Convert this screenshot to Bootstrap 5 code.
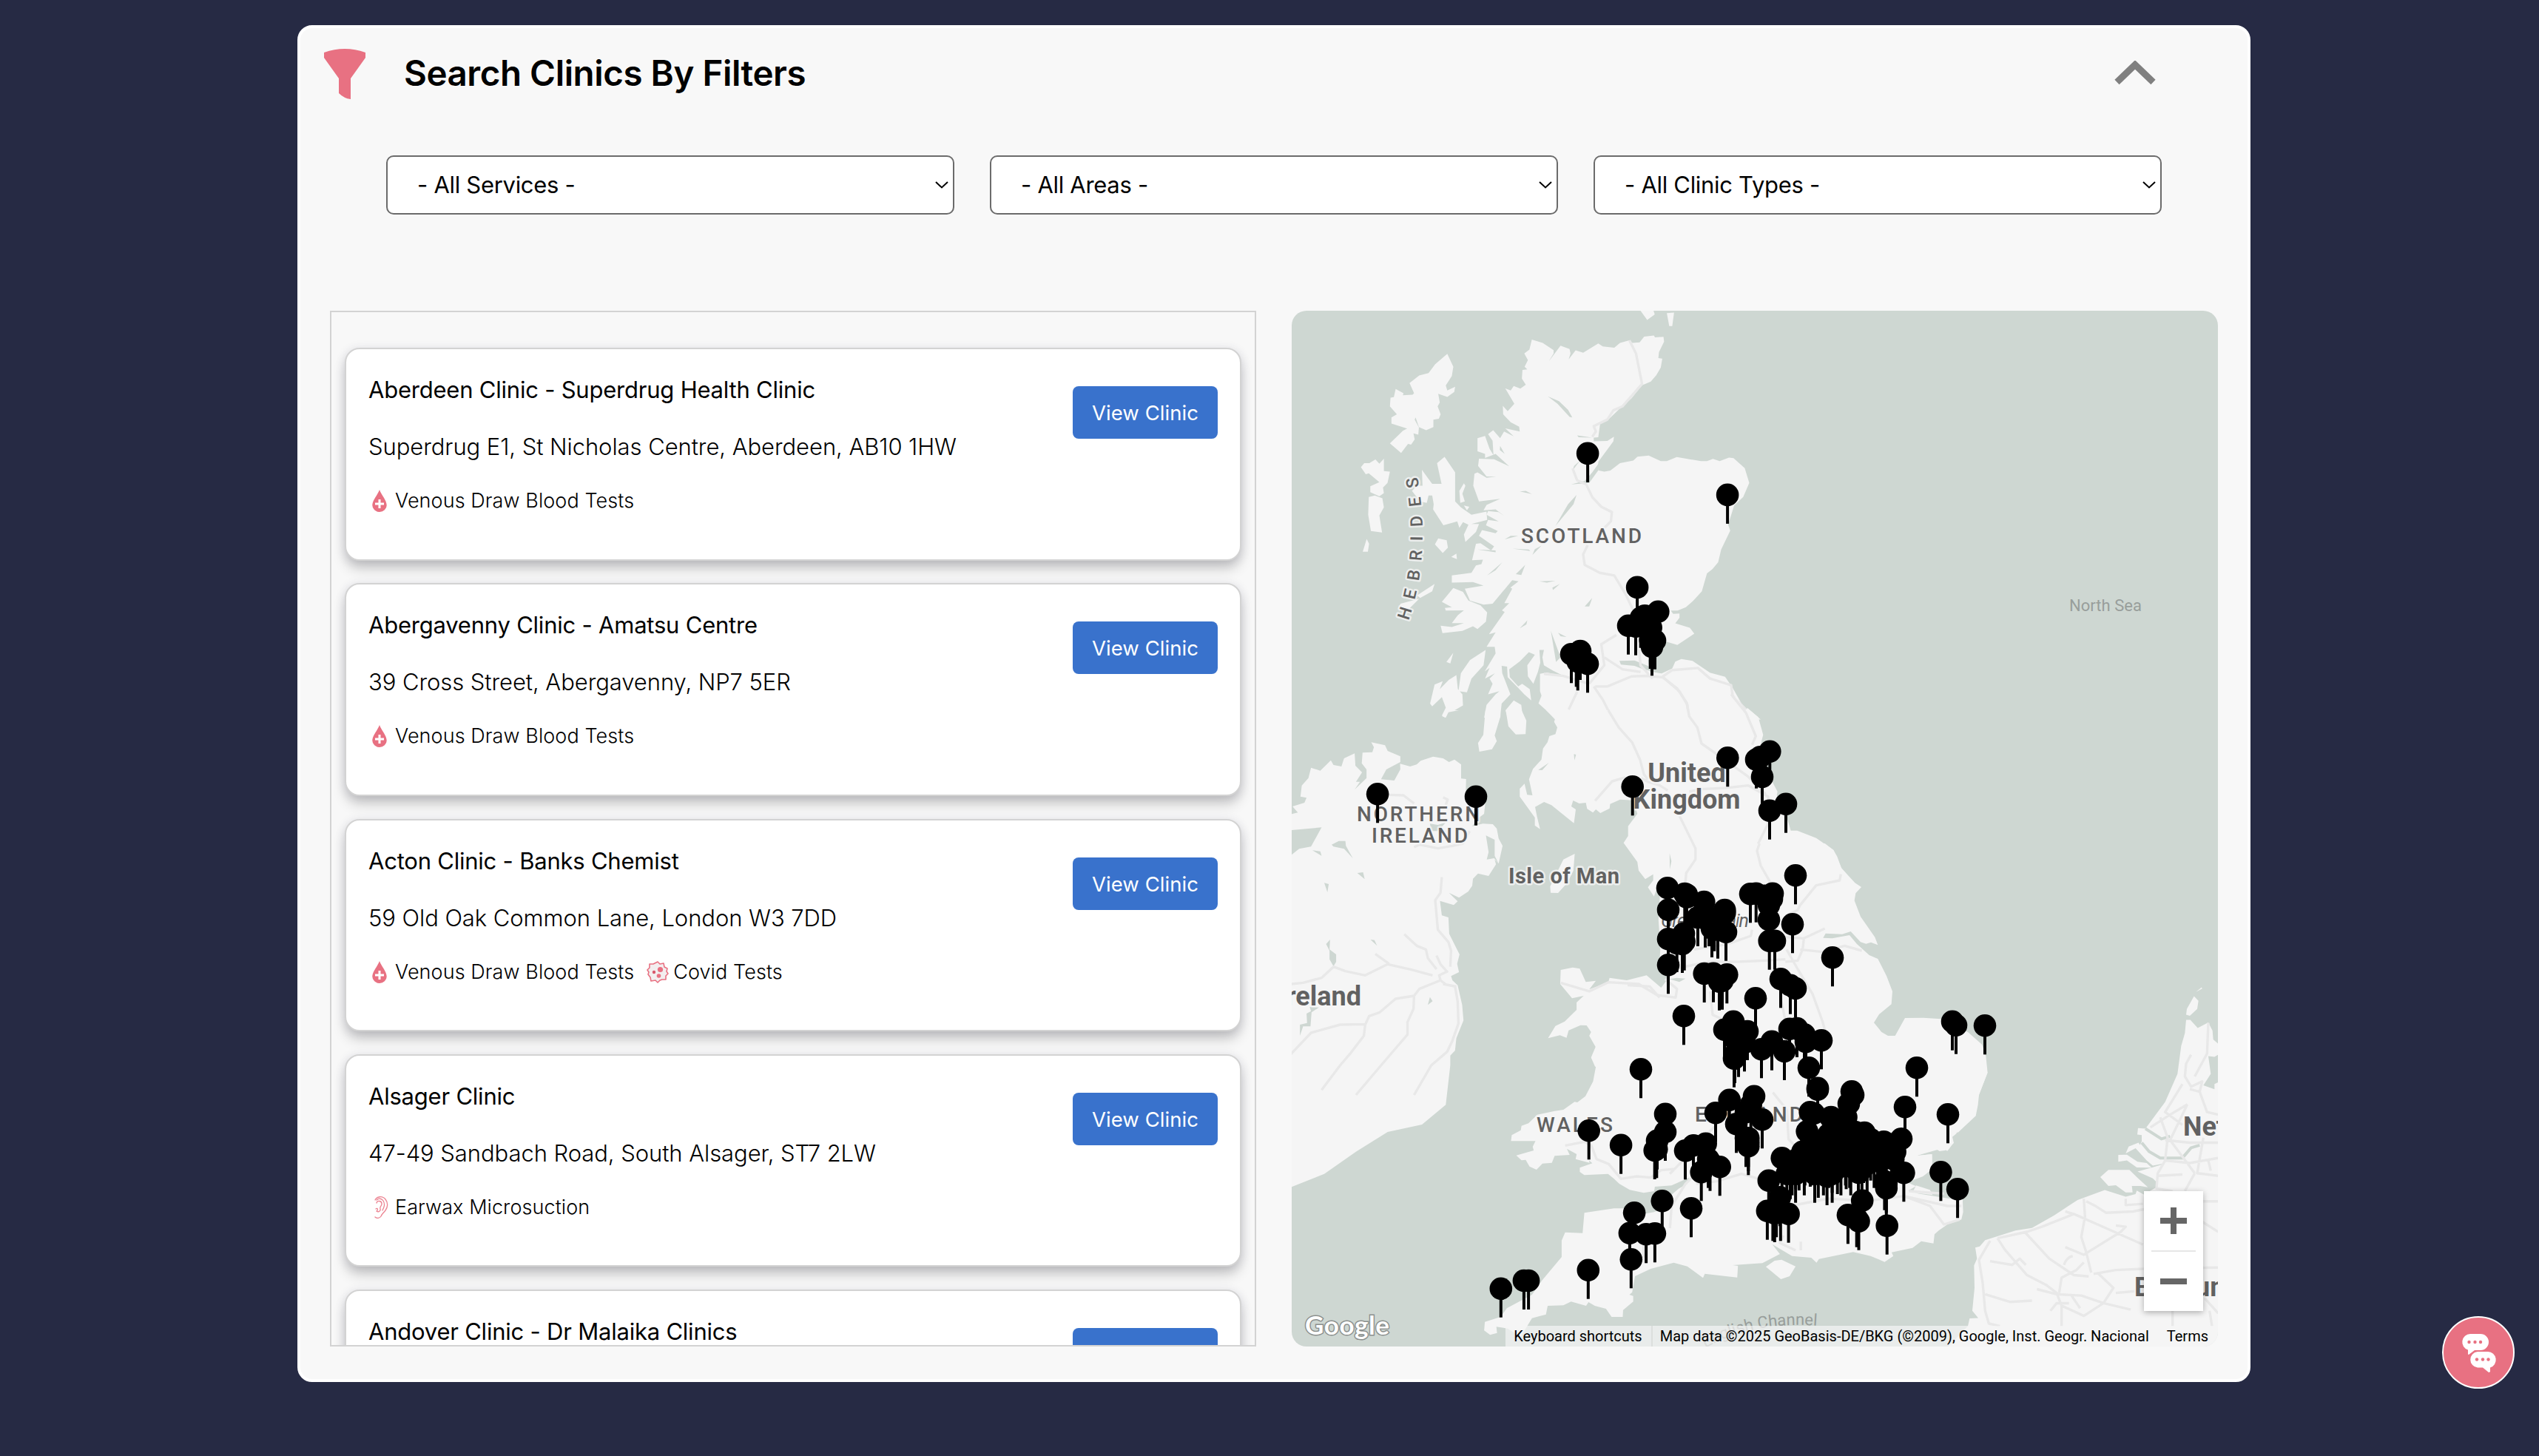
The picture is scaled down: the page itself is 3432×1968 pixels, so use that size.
<!DOCTYPE html>
<html lang="en">
<head>
<meta charset="utf-8">
<meta name="viewport" content="width=device-width, initial-scale=1">
<title>Search Clinics</title>
<link rel="stylesheet" href="https://cdn.jsdelivr.net/npm/bootstrap@5.3.0/dist/css/bootstrap.min.css">
<script src="https://cdn.jsdelivr.net/npm/bootstrap@5.3.0/dist/js/bootstrap.bundle.min.js"></script>
<style>
html, body { height: 1968px; overflow: hidden; }
body { background: #262a44; font-family: Inter, "Liberation Sans", sans-serif; color: #000; }
.finder { width: 2640px; height: 1834px; margin: 34px 0 0 402px; border: 4px solid #fff; border-radius: 20px; background: #f8f8f8; }
.finder-head { height: 172px; padding: 28px 124px 0 32px; }
.finder-head h1 { font-size: 47.5px; font-weight: 600; line-height: 66px; margin: 0 0 0 52px; letter-spacing: -.45px; }
.filters { padding: 0 116px; gap: 48px; height: 80px; }
.filters .form-select { height: 80px; flex: 1 1 0; border: 2px solid #6b6b6b; border-radius: 10px; font-size: 31px; letter-spacing: -.3px; color: #000; padding: 1px 40px 0; background: #fff url("data:image/svg+xml,%3Csvg xmlns='http://www.w3.org/2000/svg' width='18' height='10'%3E%3Cpath d='M1 1l8 7.5L17 1' fill='none' stroke='%23000' stroke-width='2'/%3E%3C/svg%3E") no-repeat right 6px center / 18px 10px; }
.panes { padding: 130px 40px 0; gap: 48px; }
.results { width: 1252px; height: 1400px; border: 2px solid #d3d3d3; padding: 48px 18px 0; overflow: hidden; }
.clinic { height: 287.5px; margin-bottom: 30.8px; background: #fff; border: 2px solid #d3d3d3; border-radius: 20px; padding: 31px 30px 0; box-shadow: 0 12px 18px -2px rgba(0,0,0,.2), 0 2px 14px rgba(50,50,93,.14); }
.clinic h2 { font-size: 31px; font-weight: 400; line-height: 48px; margin: 0 0 29px; letter-spacing: -.22px; }
.clinic .addr { font-size: 31px; font-weight: 300; line-height: 48px; margin: 0 0 25px; letter-spacing: -.07px; }
.svc { font-size: 27px; font-weight: 300; line-height: 48px; margin-right: 17px; letter-spacing: .08px; }
.svc svg { width: 30px; height: 30px; margin-right: 6px; }
.btn-view { width: 196px; height: 71px; margin-top: 19px; background: #3972cc; color: #fff; border-radius: 8px; font-size: 27.5px; line-height: 72px; padding: 0; border: 0; letter-spacing: .05px; }
.map { width: 1252px; height: 1400px; border-radius: 20px; overflow: hidden; background: #ced7d2; }
.map > svg { display: block; }
.land { fill: #f5f5f5; }
.sea { fill: #ced7d2; }
.inlet { fill: none; stroke: #ced7d2; stroke-width: 4; vector-effect: non-scaling-stroke; }
.road { fill: none; stroke: #e8e8e8; stroke-width: 3.4; stroke-linejoin: round; vector-effect: non-scaling-stroke; }
.lbl { font-family: Roboto, sans-serif; fill: #616161; paint-order: stroke; stroke: #f5f5f5; stroke-width: 5px; stroke-linejoin: round; stroke-opacity: .8; }
.region { font-size: 28px; font-weight: 500; }
.country { font-size: 36px; font-weight: 700; }
.water { font-family: Roboto, sans-serif; fill: #989e9b; font-size: 22px; }
.zoomer { right: 20px; bottom: 48px; width: 80px; height: 162px; background: #fff; box-shadow: 0 2px 8px rgba(0,0,0,.3); }
.legal { right: 0; bottom: 0; height: 28px; background: rgba(245,245,245,.7); font: 20px/28px Roboto, sans-serif; white-space: nowrap; }
.legal span { padding: 0 12px 0 11px; }
.legal .credits { padding: 0 24px 0 10px; border-left: 2px solid #dcdfdd; }
.legal .terms { padding: 0 13px 0 0; }
.chat { right: 33px; top: 1779px; width: 98px; height: 98px; border: 2px solid #fff; background: #e87182; }
</style>
</head>
<body>
<svg width="0" height="0" class="position-absolute">
  <symbol id="drop" viewBox="0 0 30 30"><path d="M15 0C17.500 7 24.700 14 24.700 21a9.700 9 0 0 1-19.400 0C5.300 14 12.500 7 15 0z" fill="#e87182"/><path d="M15 13v12M9 19h12" stroke="#fff" stroke-width="3"/></symbol>
  <symbol id="covid" viewBox="0 0 30 30"><path d="M15 1l3 3 5-1 1 5 4 2-1 4 2 3-3 3 0 5-5 0-3 1-3 3-3-3-6 1-1-5-3-4 1-3-2-3 3-3 0-5 5 0z" fill="#f3eeef" stroke="#e87182" stroke-width="1.6" stroke-linejoin="round"/><circle cx="18.500" cy="11.500" r="3.600" fill="#e87182"/><circle cx="10" cy="15" r="2.200" fill="#d8576b"/><circle cx="16.500" cy="20" r="2.800" fill="#e87182"/></symbol>
  <symbol id="ear" viewBox="0 0 30 30"><g fill="none" stroke="#ec8492" stroke-width="1.300" stroke-linecap="round"><path d="M9 5C11 0 19-1 23 4c4 5 3 11 0 15-3 4-5 5-6 8-2 3-6 3-8 1"/><path d="M11 5c3-3 7-2 9 1 3 5 1 9-1 13M11 9c1-4 7-3 7 1 0 4-3 3-2 7 1 3-3 5-5 3M10 17c3-2 3 2 1 3"/></g></symbol>
</svg>

<main class="finder">
  <header class="finder-head d-flex align-items-start">
    <svg width="56" height="68" viewBox="0 0 56 68" class="flex-shrink-0"><path d="M0 5Q28-5 56 5v7L36 40v28q-9-1-16-8V40L0 12z" fill="#e87182"/></svg>
    <h1>Search Clinics By Filters</h1>
    <svg class="ms-auto mt-3" width="56" height="34" viewBox="0 0 56 34"><path d="M3.500 29L28 5.500 52.500 29" fill="none" stroke="#808080" stroke-width="9"/></svg>
  </header>
  <div class="filters d-flex">
    <select class="form-select"><option>- All Services -</option></select>
    <select class="form-select"><option>- All Areas -</option></select>
    <select class="form-select"><option>- All Clinic Types -</option></select>
  </div>
  <div class="panes d-flex">
    <section class="results">
      <article class="clinic d-flex justify-content-between align-items-start"><div><h2>Aberdeen Clinic - Superdrug Health Clinic</h2><p class="addr">Superdrug E1, St Nicholas Centre, Aberdeen, AB10 1HW</p><div class="d-flex"><span class="svc d-flex align-items-center"><svg><use href="#drop"/></svg>Venous Draw Blood Tests</span></div></div><a class="btn btn-view">View Clinic</a></article>
      <article class="clinic d-flex justify-content-between align-items-start"><div><h2>Abergavenny Clinic - Amatsu Centre</h2><p class="addr">39 Cross Street, Abergavenny, NP7 5ER</p><div class="d-flex"><span class="svc d-flex align-items-center"><svg><use href="#drop"/></svg>Venous Draw Blood Tests</span></div></div><a class="btn btn-view">View Clinic</a></article>
      <article class="clinic d-flex justify-content-between align-items-start"><div><h2>Acton Clinic - Banks Chemist</h2><p class="addr">59 Old Oak Common Lane, London W3 7DD</p><div class="d-flex"><span class="svc d-flex align-items-center"><svg><use href="#drop"/></svg>Venous Draw Blood Tests</span><span class="svc d-flex align-items-center"><svg><use href="#covid"/></svg>Covid Tests</span></div></div><a class="btn btn-view">View Clinic</a></article>
      <article class="clinic d-flex justify-content-between align-items-start"><div><h2>Alsager Clinic</h2><p class="addr">47-49 Sandbach Road, South Alsager, ST7 2LW</p><div class="d-flex"><span class="svc d-flex align-items-center"><svg><use href="#ear"/></svg>Earwax Microsuction</span></div></div><a class="btn btn-view">View Clinic</a></article>
      <article class="clinic d-flex justify-content-between align-items-start"><div><h2>Andover Clinic - Dr Malaika Clinics</h2></div><a class="btn btn-view">View Clinic</a></article>
    </section>

    <section class="map position-relative">
      <svg width="1252" height="1400" viewBox="1746 420 1252 1400">
        <!-- Scotland -->
        <g transform="translate(1740 410) scale(.40816 .35714)">
          <path class="land" d="M810 137L846 150 882 177 882 190 866 220 905 160 935 173 938 190 932 212 955 178 980 187 1030 152 1045 163 1083 168 1102 150 1133 140 1143 150 1167 148 1182 126 1214 122 1218 129 1246 127 1248 145 1231 185 1229 207 1242 209 1237 243 1222 272 1204 296 1175 310 1140 360 1100 400 1065 438 1036 457 1030 507 1015 508 1015 522 1060 521 1082 505 1080 522 1030 600 1030 632 1050 637 1070 633 1102 605 1146 595 1160 580 1197 576 1237 597 1257 597 1290 582 1370 597 1390 597 1410 589 1432 597 1463 584 1478 586 1515 624 1530 680 1510 733 1480 765 1460 838 1467 860 1437 932 1427 980 1408 1006 1390 1022 1373 1090 1345 1125 1320 1150 1293 1163 1270 1163 1278 1175 1299 1174 1299 1190 1285 1211 1333 1228 1348 1250 1292 1293 1255 1280 1230 1330 1195 1350 1200 1393 1240 1401 1275 1382 1285 1356 1305 1346 1342 1353 1400 1398 1450 1413 1475 1455 1517 1540 1524 1532 1568 1575 885 1568 832 1514 842 1485 837 1468 837 1402 860 1397 915 1410 880 1390 850 1370 845 1340 850 1312 835 1312 838 1360 830 1395 815 1440 797 1412 795 1370 820 1330 800 1320 770 1355 735 1385 737 1415 765 1450 778 1440 803 1460 808 1503 785 1480 760 1450 730 1415 728 1375 710 1372 712 1400 739 1480 710 1515 705 1568 652 1568 660 1520 690 1480 703 1468 665 1480 680 1440 670 1420 688 1400 655 1420 670 1380 654 1393 690 1325 687 1300 660 1300 690 1245 668 1252 720 1168 711 1162 735 1135 719 1135 745 1080 739 1076 766 1052 745 1048 680 1137 650 1140 605 1125 588 1080 650 1068 615 1055 545 1057 545 1030 610 1020 625 992 643 987 648 970 612 972 625 910 640 908 675 935 685 920 635 880 645 858 690 870 697 862 658 840 665 820 700 825 660 800 665 786 700 790 719 805 690 780 650 783 660 763 705 740 635 750 616 690 620 645 630 640 660 660 692 656 660 655 632 615 635 588 685 590 735 617 690 570 655 585 655 570 630 560 630 510 655 502 670 550 683 575 680 520 665 495 682 480 705 510 718 485 750 503 722 473 770 485 768 467 740 450 715 420 714 388 730 408 752 380 722 322 740 330 750 313 772 323 790 308 777 285 779 252 795 250 786 240 797 215 785 190 802 175z"/>
          <path class="land" d="M530 191L550 240 545 275 525 311 530 330 556 316 553 335 530 354 500 342 505 375 498 390 508 420 502 437 484 440 484 468 460 480 436 468 425 432 422 440 436 470 434 497 418 492 422 515 410 535 400 532 377 566 340 530 383 482 397 474 345 455 345 432 363 420 340 390 342 357 353 355 359 324 385 340 383 348 415 346 420 340 405 302 437 273 468 264 490 230zM244 620L255 605 272 605 292 591 305 607 320 588 320 635 340 637 332 680 317 697 320 718 305 730 275 715 275 692 305 677 270 643 260 647zM270 733L290 727 315 738 320 772 305 803 314 867 277 862 268 800zM263 892L271 910 267 940 250 940zM521 581L556 640 556 750 575 772 610 800 660 788 662 820 610 835 635 835 625 865 590 903 585 875 600 838 582 828 570 850 563 825 517 840 483 780 485 760 480 727 468 727 462 755 440 750 413 710 430 690 448 690 446 630 465 660 480 683 511 683 496 605zM585 681L590 690 580 720 588 750 573 755 570 710zM585 765L603 770 595 783zM500 890L528 897 532 925 515 945 489 912zM560 947L562 968 543 960zM488 1062L480 1090 440 1115 430 1105zM437 1118L400 1160 370 1150 375 1137zM550 1077L582 1092 600 1125 640 1143 662 1170 658 1205 630 1233 615 1222 580 1240 514 1248 508 1220 545 1225 585 1210 545 1210 565 1180 585 1162 525 1163 522 1153 545 1150 512 1130zM657 1312L650 1370 610 1420 595 1472 567 1468 575 1400 605 1350zM560 1407L565 1460 580 1480 582 1522 550 1543 530 1540 523 1568 512 1560 525 1530 512 1490 480 1525 473 1515 488 1443 515 1430 505 1460 535 1425zM550 1322L540 1363 527 1357zM750 1503L775 1520 780 1568 730 1568 723 1540zM1170 28L1213 28 1217 42 1192 63zM1257 37L1281 35 1275 86 1265 86z"/>
          <path class="sea" d="M863 352L900 370 930 403 944 432 935 430 895 380zM960 500L1010 508 965 507zM958 725L948 760 888 843 930 760zM1035 600L1030 632 1000 680 940 685 985 672 1010 640zM970 595L945 632 950 615zM842 917L812 952 820 930zM745 928L800 932 805 937zM788 990L775 1028 757 1025zM712 980L690 1010 662 1030zM835 1052L888 1050 860 1057zM903 1062L880 1085 878 1076zM1010 1115L1000 1147 985 1147zM873 1240L905 1340 890 1357zM897 1247L925 1263 905 1260zM795 1200L770 1230 792 1215zM770 712L810 722 790 710zM630 932L690 935 690 942zM720 893L765 880 740 880zM705 540L720 570 704 555zM1100 1353L1150 1352 1190 1370 1240 1401 1180 1385 1150 1372 1105 1367z"/>
          <path class="road" d="M1133 140L1155 190 1175 305 1110 390 1080 405 1060 440 1015 465 1022 485 1010 505M945 625L960 670 990 685 1010 733 1040 770 1075 790 1072 825 1050 850M995 915L980 950 985 990 1035 1020 1083 1030 1120 1100 1145 1160M1090 1255L1040 1290 1050 1370 1000 1440M1015 1450L1045 1500 1075 1568M960 1470L932 1537M1020 1450L1060 1450 1140 1412 1190 1410 1240 1415 1275 1388 1360 1380 1400 1420 1470 1445 1475 1485 1530 1550M1245 1415L1300 1470 1325 1520 1330 1568M1165 1310L1170 1370 1210 1420M1050 1340L1110 1385 1170 1395M850 1402L915 1410 1000 1440"/>
        </g>
        <!-- Borders and the north east coast -->
        <g transform="translate(2100 700) scale(.33333)">
          <path class="land" d="M580 700L740 725 777 780 787 772 830 808 850 880 842 910 850 1000 908 1110 905 1125 930 1160 962 1268 988 1268 1065 1298 1135 1347 1150 1373 1167 1420 1200 1460 1200 1500 580 1500z"/>
        </g>
        <!-- Ireland, Man, Cumbria and north Wales -->
        <g transform="translate(1740 960) scale(.35714 .33333)">
          <path class="land" d="M980 0L1013 37 1010 47 1022 70 1015 97 992 105 985 130 968 155 962 200 930 238 915 280 928 345 908 343 898 298 880 318 880 350 937 435 937 467 957 482 945 430 938 392 972 372 1000 385 1085 458 1092 402 1075 390 1082 366 1105 378 1130 375 1135 400 1157 415 1168 402 1185 417 1220 398 1222 380 1260 362 1310 365 1325 420 1290 470 1290 510 1273 538 1325 615 1330 650 1355 685 1385 665 1385 690 1365 718 1388 755 1400 720 1410 760 1405 850 1412 960 1410 1010 1440 1090 1415 1125 1360 1075 1285 1095 1220 1085 1215 1103 1143 1132 1168 1097 1130 1102 1107 1048 1080 1043 1035 1053 1033 1110 1078 1168 1122 1158 1095 1185 1095 1215 1050 1262 1015 1280 987 1330 1032 1318 1057 1328 1065 1298 1110 1277 1133 1278 1150 1305 1143 1320 1167 1365 1150 1408 1165 1445 1568 1445 1568 0zM1088 582L1083 650 1060 700 1025 741 997 740 995 715 1045 605zM750 0L806 0 807 25 785 102 793 125 775 158 727 168 722 133 742 100zM827 0L887 0 905 42 902 97 865 98 837 65zM600 0L650 0 610 8 600 30 587 25z"/>
          <path class="land" d="M0 600L45 562 90 553 130 475 0 488 0 425 40 415 20 390 65 375 73 355 50 350 55 305 80 275 90 233 125 245 165 203 175 222 205 228 215 195 255 175 258 225 283 252 260 290 275 290 255 322 300 275 300 240 282 215 285 172 322 170 328 150 318 130 370 142 380 165 428 187 428 210 375 240 355 280 405 285 428 240 427 217 465 228 490 220 505 205 552 188 590 195 612 210 633 200 658 220 658 277 677 279 675 350 720 340 750 370 745 420 720 440 700 470 740 460 778 462 793 480 800 520 815 550 800 622 785 605 790 625 762 672 722 662 703 683 700 712 685 735 650 760 612 740 645 775 630 790 578 773 585 832 610 840 613 907 652 990 643 1028 650 1062 620 1078 625 1095 645 1115 662 1195 667 1258 640 1330 635 1380 617 1400 617 1440 600 1600 510 1680 380 1710 260 1790 140 1880 0 1940z"/>
          <path class="sea" d="M752 508L785 525 785 590 800 622 783 600 755 605 762 575zM540 460L570 465 600 455 570 490 545 490zM168 545L195 530 220 530 222 550 248 600 215 562 175 553zM95 568L125 572 130 590zM265 660L287 657 293 685zM140 700L157 705 152 738zM162 930L160 970 185 990 185 1020 175 1038 160 1010 160 975 147 948zM315 930L330 932 340 955zM540 1163L550 1180 532 1195zM85 1203L120 1205 92 1225 88 1282 60 1282 48 1320 48 1275 75 1268 73 1230 90 1220zM1085 178L1093 180 1087 203zM990 213L965 243 950 242zM1447 580L1454 612 1448 645z"/>
          <path class="road" d="M0 1112L60 1105 130 1085 175 1040 220 1058 295 1075 380 1030 470 1052 550 1075M333 988L385 1028M443 908L490 955 525 970 532 1005 565 1050M585 677L580 740 560 770 570 890 610 940 620 975 617 1040M565 995L580 1030 605 1060 575 1075 580 1095 600 1112 640 1120M580 1095L500 1130 480 1158 410 1170 350 1225 310 1240 295 1275 290 1320 240 1390 200 1440 130 1540M0 1410L90 1308 200 1275 295 1273M480 1158L478 1210 455 1265 455 1315 415 1365 355 1440 260 1560M590 1110L635 1120 645 1180 648 1270 625 1340 605 1385 545 1440 480 1560M385 343L440 345 480 378M480 555L500 545 570 560 625 550 665 540 690 490M590 353L607 362 600 385M1035 1105L1143 1140 1215 1103 1330 1110 1400 1155 1470 1165 1475 1130 1430 1090M1165 367L1230 288 1280 272M1340 275L1365 290 1410 305 1440 325M1215 0L1255 70 1305 130 1335 200 1350 260 1365 280M1485 430L1545 560 1545 605 1510 660 1505 720"/>
        </g>
        <!-- Trunk roads through the Borders -->
        <g transform="translate(2100 700) scale(.33333)">
          <path class="road" d="M440 645L500 690 540 750 550 805 583 850 600 915 700 985 790 1050 860 1120M720 715L780 790 820 885 805 920M550 1110L600 1100 700 1095 790 1085 870 1130 870 1240 820 1340 885 1490"/>
        </g>
        <!-- England -->
        <g transform="translate(2200 1140) scale(.33333)">
          <path class="land" d="M300 0L800 0 835 27 867 100 922 160 948 177 925 202 920 232 945 297 1003 380 1015 412 987 401 967 407 945 400 905 357 870 368 803 365 793 383 830 385 900 372 930 408 980 453 1015 468 1050 537 1074 600 1070 652 1020 693 999 727 1030 765 1078 793 1125 708 1200 707 1270 712 1380 765 1437 815 1450 870 1459 930 1425 1020 1421 1060 1412 1105 1340 1172 1310 1150 1335 1175 1317 1190 1323 1215 1287 1245 1265 1248 1250 1238 1172 1267 1235 1260 1235 1290 1225 1320 200 1320z"/>
          <path class="sea" d="M170 550L200 545 235 548 210 562z"/>
          <path class="road" d="M535 0L525 30 540 90 580 160M865 125L860 150 765 170 700 250 690 270 640 295M505 350L500 375 400 410 270 430M800 345L715 385 640 380M700 430L790 440 880 415 950 435M715 385L710 430 690 475 640 480M180 510L330 480 440 480 560 475 640 470M645 430L690 510 750 610 790 720 820 830 890 900 905 960M335 600L345 695 400 720M280 835L340 845 390 860M470 930L530 935 650 970 830 970 900 985 1000 1040 1065 1048M1000 1040L1030 1110 1040 1180M640 870L655 950 680 1030 740 1060M620 1130L650 1200 700 1270M1130 1260L1230 1180 1330 1150M400 990L390 1180 340 1230 270 1300M500 900L510 960 580 1060M620 620L640 720M0 575L90 580 130 625"/>
        </g>
        <!-- Wales and the south coast -->
        <g transform="translate(2000 1400) scale(.47192 .33333)">
          <path class="land" d="M315 0L333 45 320 90 333 125 325 185 303 245 280 270 272 268 240 300 215 305 165 320 140 355 120 365 118 383 92 403 90 427 160 427 152 450 155 465 105 485 120 505 132 503 143 530 163 543 180 518 207 515 215 487 258 483 250 458 278 480 275 500 315 515 313 505 323 517 287 535 287 552 300 565 368 560 385 580 400 600 430 625 470 637 500 630 502 612 550 607 600 575 595 600 570 620 545 650 545 690 500 715 470 722 420 700 385 700 300 718 295 800 245 797 235 830 235 897 180 990 150 1050 78 1105 60 1140 15 1160 13 1195 30 1213 50 1205 48 1180 80 1187 118 1220 150 1145 190 1130 195 1095 240 1093 262 1078 305 1095 312 1080 330 1095 362 1107 378 1140 410 1140 411 1112 440 1078 440 1055 429 1050 437 1040 445 975 490 945 556 920 595 935 640 982 645 965 738 980 740 933 725 930 810 922 860 885 838 845 895 893 950 900 965 920 972 905 1070 877 1120 893 1160 917 1185 893 1180 878 1240 860 1265 833 1300 842 1303 805 1315 790 1340 765 1380 745 1385 715 1383 650 1345 660 1255 640 1228 628 1250 610 1225 595 1270 570 1297 540 1295 480 1250 487 1325 457 1340 467 1357 435 1350 400 1368 392 1420 325 1423 280 1430 240 1455 150 1450 80 1440 40 1400 0zM820 937L845 912 865 908 905 935 888 975 863 987z"/>
          <path class="land" d="M1250 607L1290 625 1297 645 1240 636z"/>
          <path class="road" d="M245 445L300 430 320 445 335 500 370 520 405 580 450 570 490 575 520 545 560 540M620 600L680 590 750 560 800 580M545 780L550 690 590 600 620 560M890 690L1000 660 1110 670 1215 650 1290 690 1330 765 1375 745M1215 650L1340 690 1380 690M870 810L860 840 905 870M920 835L920 870M470 900L470 830M1230 630L1330 640M545 560L600 480 650 400 680 360M840 230L880 300 885 420 920 470"/>
        </g>
        <!-- Continental coast -->
        <g transform="translate(2600 1300) scale(.33333 .34435)">
          <path class="land" d="M210 1122L228 1117 250 1093 373 1055 440 1045 530 995 625 935 735 896 820 922 860 912 865 898 893 913 945 885 945 865 930 850 868 823 925 808 970 795 905 770 870 735 885 705 885 680 867 678 870 653 900 655 980 550 1030 440 1045 330 1060 280 1065 228 1082 228 1112 260 1155 238 1172 270 1175 305 1195 322 1200 362 1180 373 1155 370 1165 440 1135 485 1180 500 1180 480 1200 470 1200 1520 90 1520 130 1480 180 1430 187 1400 222 1398 198 1370 207 1280 205 1192 217 1165zM717 845L750 817 835 817 868 848 910 885 880 880 845 880 848 905 820 905 780 877 750 880zM790 758L825 757 868 785 905 790 925 808 865 807 825 780 790 785zM820 752L832 725 872 710 905 760 970 793 930 800 905 780 860 732zM1097 135L1115 153 1110 185 1080 212 1065 208 1068 185zM1128 100L1130 105 1105 118z"/>
          <path class="inlet" d="M885 710L915 745 960 770 1050 770 1085 730 1120 720M900 655L965 695 1000 685"/>
          <path class="road" d="M300 1085L330 1130 420 1230 500 1270 540 1300 560 1350 560 1430M410 1060L510 1165 610 1230 670 1235M650 930L655 1000 640 1080 660 1140 680 1220M660 940L700 960 740 985 850 980 900 970M610 990L750 1050 890 1110M575 1120L650 1150 700 1120 800 1060 820 1040 780 1035M690 1225L780 1210 890 1205 1195 1200M270 1175L360 1190 390 1165 415 1190M250 1305L350 1335 440 1330M270 1095L225 1170 240 1260 250 1370 265 1420 310 1430M460 1285L540 1305 640 1310 730 1340 840 1365M710 1225L770 1280 730 1340 650 1390 560 1350M550 1300L560 1240 620 1210 650 1180M575 980L610 990 480 1040 420 1060 300 1085M1155 240L1150 360 1100 450M1085 365L1065 400 1060 450 1085 490 1130 470 1120 510 1080 500M1050 480L980 590 1050 640M1120 510L1150 590 1195 600M920 650L1000 600 1070 560M960 610L990 690 980 780 950 830 945 890 1010 900M980 780L1080 790 1195 770M980 700L1080 710 1195 710M1070 560L1000 700 1100 830M1135 690L1110 830 1195 840M1100 830L1060 900M950 840L1050 835M1130 940L1195 940M1130 1020L1195 1060M1010 1370L1010 1430M1160 1370L1170 1430M1140 1320L1195 1380M890 1290L780 1300M570 1190Q580 1160 605 1155M1155 780L1165 820M820 930L820 955 890 950M600 1310L635 1360M515 1370L540 1340 590 1340"/>
        </g>
        <text class="lbl region" x="2056" y="734" textLength="163">SCOTLAND</text>
        <text class="lbl region" x="1834" y="1110" textLength="166">NORTHERN</text>
        <text class="lbl region" x="1854" y="1139" textLength="130">IRELAND</text>
        <text class="lbl region" x="2077" y="1530" textLength="103">WALES</text>
        <text class="lbl region" x="2291" y="1516" textLength="146">ENGLAND</text>
        <text class="lbl" x="2039" y="1194" font-size="29" font-weight="700" textLength="150">Isle of Man</text>
        <text class="lbl country" x="2280" y="1057" text-anchor="middle">United</text>
        <text class="lbl country" x="2280" y="1093" text-anchor="middle">Kingdom</text>
        <text class="lbl country" x="1840" y="1359" text-anchor="end">Ireland</text>
        <text class="lbl country" x="2951" y="1535">Netherlands</text>
        <text class="lbl country" x="2885" y="1752">Belgium</text>
        <text class="lbl" x="2245" y="1253" font-size="25" font-style="italic" textLength="119">Great Britain</text>
        <path id="arcH" d="M1904 839Q1936 745 1914 634" fill="none"/>
        <text class="lbl" font-size="23" font-weight="500"><textPath href="#arcH" textLength="197">HEBRIDES</textPath></text>
        <text class="water" x="2797" y="826" textLength="98">North Sea</text>
        <path id="arcC" d="M2305 1822Q2370 1785 2460 1792" fill="none"/>
        <text class="water"><textPath href="#arcC">English Channel</textPath></text>
        <g id="pins"></g>
        <text x="1764" y="1804" font-family="Lato" font-size="35" font-weight="700" fill="#fff" stroke="#8b8f8d" stroke-width="3" paint-order="stroke" textLength="114">Google</text>
      </svg>
      <div class="zoomer position-absolute d-flex flex-column align-items-center">
        <svg width="80" height="162"><path d="M22 40h36M40 22v36M22 122h36" stroke="#666" stroke-width="8"/><path d="M10 81h60" stroke="#e6e6e6" stroke-width="2"/></svg>
      </div>
      <div class="legal position-absolute d-flex">
        <span>Keyboard shortcuts</span><span class="credits">Map data ©2025 GeoBasis-DE/BKG (©2009), Google, Inst. Geogr. Nacional</span><span class="terms">Terms</span>
      </div>
    </section>
  </div>
</main>

<a class="chat position-absolute rounded-circle d-block">
  <svg width="94" height="94" viewBox="0 0 94 94"><path d="M36 22h14a11 11 0 0 1 0 22H42l-8 6q-1 0-1-1v-5.500A11 11 0 0 1 36 22z" fill="#fff"/><path d="M46 46h14a11 11 0 0 1 3 21.500V73q-1 1-2 1l-8-6.500H46a10.800 10.800 0 0 1 0-21.500z" fill="#fff"/><g fill="#e87182"><circle cx="34.500" cy="33" r="2.200"/><circle cx="42.500" cy="33" r="2.200"/><circle cx="50" cy="33" r="2.200"/><circle cx="45" cy="56.500" r="2.200"/><circle cx="53" cy="56.500" r="2.200"/><circle cx="60.500" cy="56.500" r="2.200"/></g></svg>
</a>

<script>
// Clinic pins, grouped by map sector: origin, sector scale, then x,y pairs.
const sectors = [
  [1740, 410, 2.45, 2.8, "995,568 1458,725 1159,1075"],
  [2100, 700, 3, 3, "424,380 370,397 355,405 303,437 333,440 353,410 380,430 395,445 411,497 399,523 392,495 72,553 108,540 138,592 98,583 92,568 706,973 877,947 838,970 822,980 846,1050 320,1090 876,1187 942,1160"],
  [1740, 960, 2.8, 3, "342,340 714,350"],
  [2200, 1140, 3, 3, "681,130 162,181 232,204 240,208 240,218 165,269 310,237 394,270 394,282 285,300 315,305 165,388 228,365 222,408 200,405 230,398 165,493 342,345 330,300 352,320 366,350 399,359 498,205 521,203 555,212 588,203 585,225 573,250 573,310 669,328 575,395 597,395 831,463 311,528 348,527 403,532 372,560 384,557 621,550 660,575 681,588 519,628 228,700 429,722 393,755 486,762 440,800 432,872 450,830 474,808 435,855 585,803 543,835 636,843 657,752 687,750 717,775 723,805 786,799 735,910 771,992 771,998 54,916 909,1006 915,1020 897,1055 413,1040 513,1025 500,1060 357,1093 441,1138 546,1120 480,1090 490,1195 480,1195 490,1228 490,1212 1317,722 1332,737 1449,739 1173,910 1125,1069 1299,1099 153,1097 153,1170 120,1205 110,1245 118,1240 740,1090 755,1095 728,1168 825,1110 234,1246 267,1225 317,1217 1110,1198 1039,1210 960,1175"],
  [2000, 1400, 2.119, 3, "313,385 405,443 523,670 606,700 443,718 430,800 477,805 502,802 434,907 311,950 61,1025 127,993 140,993 655,500 635,553 660,512 688,532 828,587 866,496 905,505 905,560 880,560 860,655 850,700 824,710 840,715 845,720 862,715 885,722 1055,727 1080,740 1086,752 1096,668 1167,770 1165,600 1165,618 1160,590 1215,556 1321,553 1369,622 1190,470 1185,500 960,440 1000,400 1006,332 1030,350 1050,330 1045,370 1075,390 1102,393 1120,420 1140,450 1130,500 1100,480 1060,430 1030,460 990,480 950,490 930,530 960,560 970,540 995,570 1035,530 1060,500 1085,555 1095,540 1050,505 1063,530 1010,520 1165,490 1145,510 932,490 947,495 1025,525 1048,490 1000,440 975,430 1080,440 1120,470 1160,460 945,450 925,470 895,530 915,510 1010,560 985,530 1020,400 1085,500 1110,520 1035,420 1105,440 1180,440 890,545 1000,500"]
];
let pinMarkup = "";
for (const [ox, oy, sx, sy, list] of sectors)
  for (const pair of list.split(" ")) {
    const [x, y] = pair.split(",").map(Number);
    const cx = (ox + x / sx).toFixed(1), cy = (oy + y / sy).toFixed(1);
    pinMarkup += `<circle cx="${cx}" cy="${cy}" r="15.3"/><path d="M${cx} ${cy}v39" stroke="#000" stroke-width="4"/>`;
  }
document.getElementById("pins").innerHTML = pinMarkup;
</script>
</body>
</html>
